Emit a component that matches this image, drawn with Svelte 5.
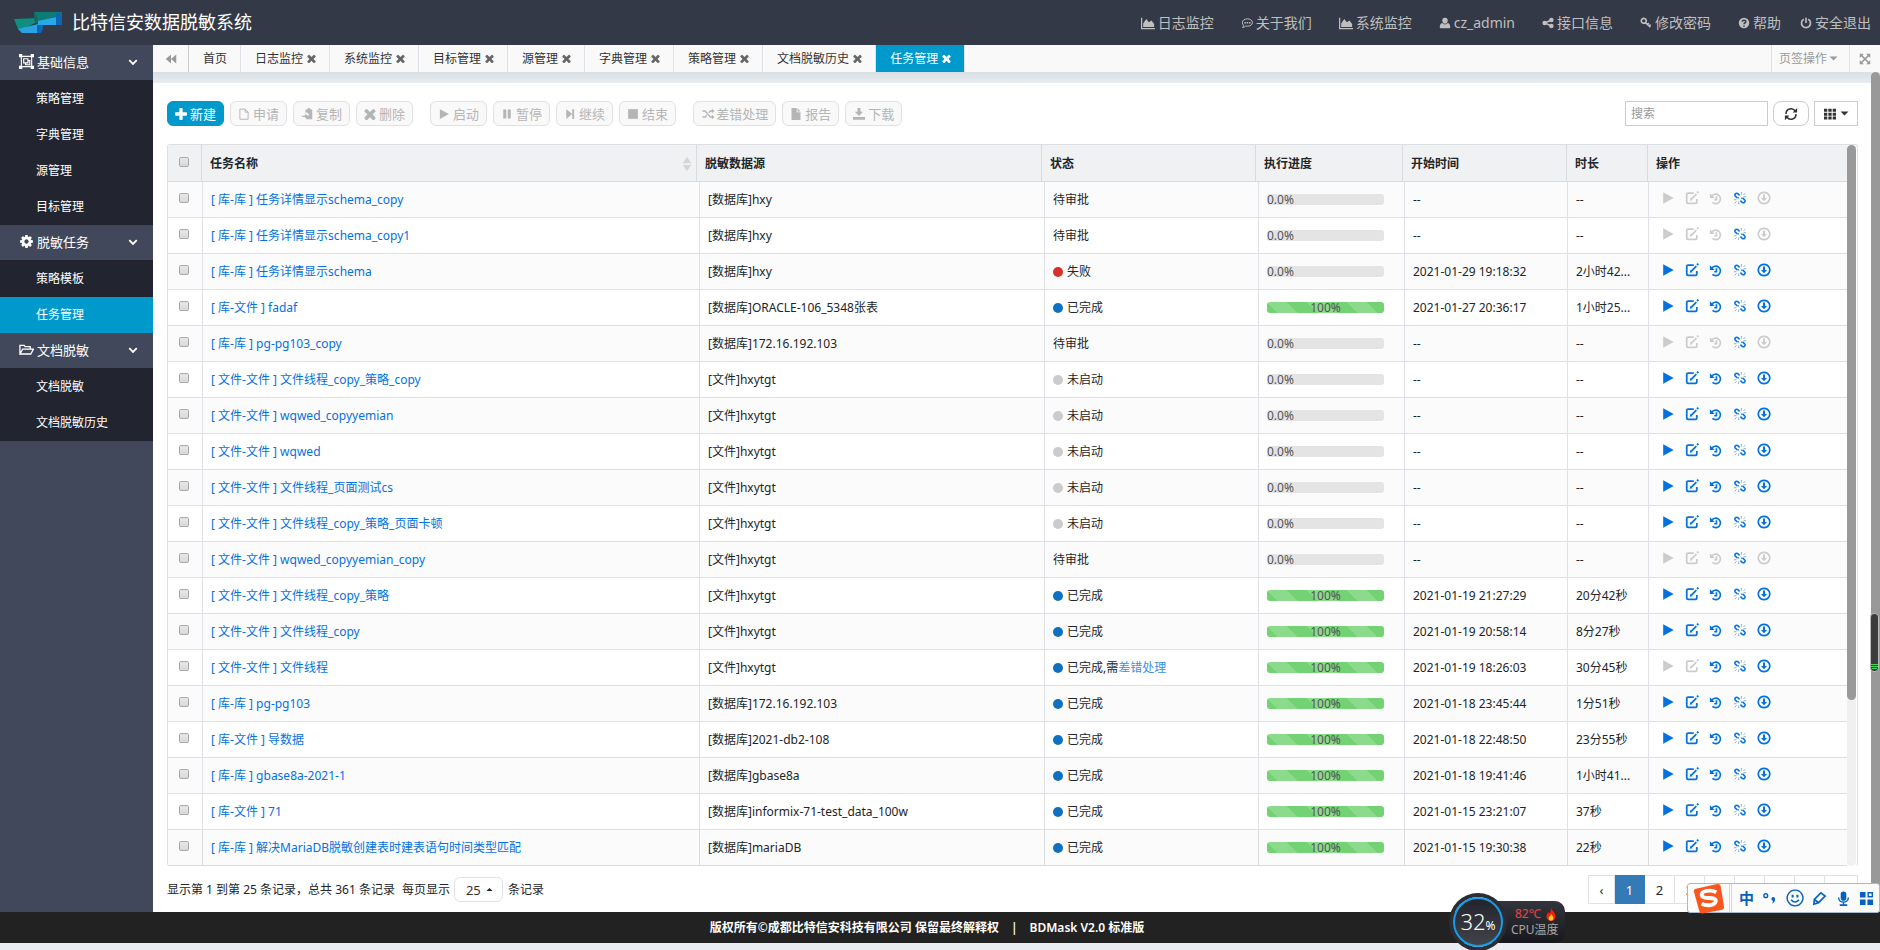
<script>
	const icons = {
		area: { fill: 'M0 2h1.400v11.600H16V15H0zM2.500 12.600V8.500L6 3.500l3 3.500 3-2 3 4v3.600z' },
		comment: {
			line: 'M8.500 2.500c3.800 0 6.700 2 6.700 4.900s-2.900 4.900-6.700 4.900c-.8 0-1.600-.1-2.300-.3-1 1-2.400 1.800-4.200 2 .9-.9 1.300-1.900 1.300-3-1-.9-1.500-2.200-1.500-3.600 0-2.900 2.900-4.900 6.700-4.900z',
			width: 1.3,
			fill: 'M4.500 6.500h2v2h-2zM7.600 6.500h2v2h-2zM10.700 6.500h2v2h-2z'
		},
		user: { fill: 'M8 1a3.600 3.600 0 0 1 3.600 3.900C11.600 7.200 10 9 8 9S4.400 7.200 4.400 4.900A3.600 3.600 0 0 1 8 1zM4.200 8C2 8.500 1 11 1 13.500 1 14.500 1.800 15 2.500 15h11c.7 0 1.500-.5 1.500-1.500 0-2.500-1-5-3.200-5.500-2.200 2.500-5.400 2.500-7.600 0z' },
		share: {
			fill: 'M3.500 5a3 3 0 1 1 0 6 3 3 0 0 1 0-6zM12.500 1a3 3 0 1 1 0 6 3 3 0 0 1 0-6zM12.500 9a3 3 0 1 1 0 6 3 3 0 0 1 0-6z',
			line: 'M12.500 4l-9 4 9 4',
			width: 2
		},
		key: { line: 'M5 1.800a3.300 3.300 0 1 0 .1 0zM7.200 7.600l6.800 6M10 10.200l1.800-2M12.300 12.200l1.800-2', width: 2.2 },
		question: { fill: 'M8 1a7 7 0 1 1 0 14A7 7 0 0 1 8 1z', cut: 'M5.600 6.200C5.700 3.800 10.500 3.600 10.400 6.200 10.300 7.800 8 7.800 8 9.600M8 11.200v1.800' },
		power: { line: 'M5 3a6 6 0 1 0 6 0M8 1v7', width: 2.2 },
		group: {
			line: 'M2.500 2.500h11v11h-11zM5 5h4.500v4.500H5zM9.500 7H11.500v4.500H7V9.500',
			width: 1.2,
			fill: 'M0 0h3.500v3.500H0zM12.500 0H16v3.500h-3.500zM0 12.500h3.500V16H0zM12.500 12.500H16V16h-3.500z'
		},
		cog: {
			box: '0 0 1792 1792',
			fill: 'M1152 896q0-106-75-181t-181-75-181 75-75 181 75 181 181 75 181-75 75-181zm512-109v222q0 12-8 23t-20 13l-185 28q-19 54-39 91 35 50 107 138 10 12 10 25t-9 23q-27 37-99 108t-94 71q-12 0-26-9l-138-108q-44 23-91 38-16 136-29 186-7 28-36 28h-222q-14 0-24.500-8.500t-11.500-21.500l-28-184q-49-16-90-37l-141 107q-10 9-25 9-14 0-25-11-126-114-165-168-7-10-7-23 0-12 8-23 15-21 51-66.500t54-70.500q-27-50-41-99l-183-27q-13-2-21-12.500t-8-23.500v-222q0-12 8-23t19-13l186-28q14-46 39-92-40-57-107-138-10-12-10-24 0-10 9-23 26-36 98.500-107.500t94.500-71.500q13 0 26 10l138 107q44-23 91-38 16-136 29-186 7-28 36-28h222q14 0 24.500 8.500t11.500 21.500l28 184q49 16 90 37l142-107q9-9 24-9 13 0 25 10 129 119 165 170 7 8 7 22 0 12-8 23-15 21-51 66.500t-54 70.500q26 50 41 98l183 28q13 2 21 12.500t8 23.500z'
		},
		folder: { line: 'M1 12V3.500h4.500l1 1.500H12v2.500M1 12.800l3-5.300h11.500l-3 5.300z', width: 1.4 },
		chevron: { line: 'M3 5.500l5 5 5-5', width: 2.4 },
		backward: { fill: 'M8 2v12L1 8zM15 2v12L8 8z' },
		expand: {
			line: 'M3 3l10 10M13 3L3 13',
			width: 2.2,
			fill: 'M1 1h5.500L1 6.500zM15 1v5.500L9.500 1zM1 15V9.500L6.500 15zM15 15H9.500L15 9.500z'
		},
		times: {
			box: '256 256 1280 1280',
			fill: 'M1490 1322q0 40-28 68l-136 136q-28 28-68 28t-68-28l-294-294-294 294q-28 28-68 28t-68-28l-136-136q-28-28-28-68t28-68l294-294-294-294q-28-28-28-68t28-68l136-136q28-28 68-28t68 28l294 294 294-294q28-28 68-28t68 28l136 136q28 28 28 68t-28 68l-294 294 294 294q28 28 28 68z'
		},
		plus: {
			box: '192 128 1408 1408',
			fill: 'M1600 736v192q0 40-28 68t-68 28h-416v416q0 40-28 68t-68 28h-192q-40 0-68-28t-28-68v-416h-416q-40 0-68-28t-28-68v-192q0-40 28-68t68-28h416v-416q0-40 28-68t68-28h192q40 0 68 28t28 68v416h416q40 0 68 28t28 68z'
		},
		page: { line: 'M2.500 1.500h7l4 4v9.500h-11zM9.500 1.500v4h4', width: 1.3 },
		copy: { fill: 'M6 2h2.500c0-2.500 4-2.500 4 0H15v13H7v-2.500l4-3.500-4-4v2H6zM0 9.500c2 1.500 3.500 1 5.500 0V7.500L9.500 10.500l-4 3.500v-2C3 12.500 1 11.500 0 9.500z' },
		play: { fill: 'M2.500 1.500v13L14.500 8z' },
		pause: { fill: 'M3 2h4v12H3zM9 2h4v12H9z' },
		step: { fill: 'M3 1.500L11 8l-8 6.500zM11 1.500h2.500v13H11z' },
		stop: { fill: 'M1.500 1.500h13v13h-13z' },
		random: { line: 'M0 4h3.500l7 8H13M0 12h3.500l2-2.300M8.500 6.300l2-2.300H13', width: 1.8, fill: 'M12.500 1L16 4l-3.500 3zM12.500 9l3.500 3-3.500 3z' },
		file: { fill: 'M2 0h7v5.500h5V16H2zM10 0l4 4.500h-4z' },
		download: { fill: 'M6 0h4v5h3.500L8 10.500 2.500 5H6zM0 12h16v3.500H0z' },
		refresh: { line: 'M2.300 8A5.800 5.800 0 0 1 12.800 4.500M13.700 8A5.800 5.800 0 0 1 3.200 11.500', width: 1.8, fill: 'M15 1v5.200H9.800zM1 15V9.800h5.200z' },
		grid: { fill: 'M0 1h4.400v4H0zM5.800 1h4.400v4H5.800zM11.600 1H16v4h-4.400zM0 6.200h4.400v4H0zM5.800 6.200h4.400v4H5.800zM11.600 6.200H16v4h-4.400zM0 11.400h4.400v4H0zM5.800 11.400h4.400v4H5.800zM11.600 11.400H16v4h-4.400z' },
		edit: { line: 'M10 2.500H3.500Q2 2.500 2 4v8.500Q2 14 3.500 14H12q1.500 0 1.500-1.500V9M7 9.500L13 3.500', width: 2, fill: 'M6 8l2.500 2.500L5.500 11zM13 1.500L14.500 0 16 1.500 14.500 3z' },
		history: { line: 'M3.200 6A5.400 5.400 0 1 1 4 13M8.500 6v4H6', width: 1.9, fill: 'M1 2.500v5.500h5.500z' },
		unlink: { line: 'M7.500 5L5.500 3Q4 2 2.700 3.300T3 6.200L5 8M8.500 11l2 2q1.500 1 2.800-.3T13 9.800L11 8M5.500 7.500l1 .8M9.500 7.700l1 .8', width: 1.7, thin: 'M9.500 1v3M12 4.500l2-2M12 6.500h3M1 10h3M4 12l-2 2M6.500 12v3' },
		down: { line: 'M8 1.500a6.500 6.500 0 1 0 .1 0z', width: 1.9, fill: 'M6.800 4h2.400v4h2.300L8 11.800 4.500 8h2.300z' },
		caretDown: { fill: 'M1 4.500h14L8 11.500z' },
		caretUp: { fill: 'M1 11.500h14L8 4.500z' },
		sort: { fill: 'M8 0l5 7H3zM3 9h10l-5 7z' },
		smile: { line: 'M8 1a7 7 0 1 0 .1 0zM4.500 9.500q3.500 4 7 0', width: 1.3, fill: 'M5 5h1.800v2.500H5zM9.300 5h1.800v2.500H9.300z' },
		pen: { line: 'M2 14l.5-5L9.500 2l4.500 3.500-7 7zM2.500 9l4.500 3.500', width: 1.8 },
		mic: { fill: 'M5 3.500a3 3 0 0 1 6 0v4a3 3 0 0 1-6 0zM4 14h8v2H4z', line: 'M2.800 7c0 6.500 10.400 6.500 10.400 0M8 12v3', width: 1.5 },
		apps: { fill: 'M1 1h6v6H1zM1 9h6v6H1zM9 9h6v6H9z', line: 'M9.800 1.800h4.400v4.400H9.800z', width: 1.5 }
	};

	const nav = [
		['area', '日志监控'],
		['comment', '关于我们'],
		['area', '系统监控'],
		['user', 'cz_admin'],
		['share', '接口信息'],
		['key', '修改密码'],
		['question', '帮助'],
		['power', '安全退出']
	];

	const menu = [
		{ icon: 'group', name: '基础信息', items: ['策略管理', '字典管理', '源管理', '目标管理'] },
		{ icon: 'cog', name: '脱敏任务', items: ['策略模板', '任务管理'] },
		{ icon: 'folder', name: '文档脱敏', items: ['文档脱敏', '文档脱敏历史'] }
	];

	const tabs = ['首页', '日志监控', '系统监控', '目标管理', '源管理', '字典管理', '策略管理', '文档脱敏历史', '任务管理'];
	let current = $state('任务管理');

	const tools = [
		[['plus', '新建'], ['page', '申请'], ['copy', '复制'], ['times', '删除']],
		[['play', '启动'], ['pause', '暂停'], ['step', '继续'], ['stop', '结束']],
		[['random', '差错处理'], ['file', '报告'], ['download', '下载']]
	];

	const columns = ['任务名称', '脱敏数据源', '状态', '执行进度', '开始时间', '时长', '操作'];

	// name, source, status, start time, duration
	const rows = [
		['[ 库-库 ] 任务详情显示schema_copy', '[数据库]hxy', '待审批', '--', '--'],
		['[ 库-库 ] 任务详情显示schema_copy1', '[数据库]hxy', '待审批', '--', '--'],
		['[ 库-库 ] 任务详情显示schema', '[数据库]hxy', '失败', '2021-01-29 19:18:32', '2小时42...'],
		['[ 库-文件 ] fadaf', '[数据库]ORACLE-106_5348张表', '已完成', '2021-01-27 20:36:17', '1小时25...'],
		['[ 库-库 ] pg-pg103_copy', '[数据库]172.16.192.103', '待审批', '--', '--'],
		['[ 文件-文件 ] 文件线程_copy_策略_copy', '[文件]hxytgt', '未启动', '--', '--'],
		['[ 文件-文件 ] wqwed_copyyemian', '[文件]hxytgt', '未启动', '--', '--'],
		['[ 文件-文件 ] wqwed', '[文件]hxytgt', '未启动', '--', '--'],
		['[ 文件-文件 ] 文件线程_页面测试cs', '[文件]hxytgt', '未启动', '--', '--'],
		['[ 文件-文件 ] 文件线程_copy_策略_页面卡顿', '[文件]hxytgt', '未启动', '--', '--'],
		['[ 文件-文件 ] wqwed_copyyemian_copy', '[文件]hxytgt', '待审批', '--', '--'],
		['[ 文件-文件 ] 文件线程_copy_策略', '[文件]hxytgt', '已完成', '2021-01-19 21:27:29', '20分42秒'],
		['[ 文件-文件 ] 文件线程_copy', '[文件]hxytgt', '已完成', '2021-01-19 20:58:14', '8分27秒'],
		['[ 文件-文件 ] 文件线程', '[文件]hxytgt', '需处理', '2021-01-19 18:26:03', '30分45秒'],
		['[ 库-库 ] pg-pg103', '[数据库]172.16.192.103', '已完成', '2021-01-18 23:45:44', '1分51秒'],
		['[ 库-文件 ] 导数据', '[数据库]2021-db2-108', '已完成', '2021-01-18 22:48:50', '23分55秒'],
		['[ 库-库 ] gbase8a-2021-1', '[数据库]gbase8a', '已完成', '2021-01-18 19:41:46', '1小时41...'],
		['[ 库-文件 ] 71', '[数据库]informix-71-test_data_100w', '已完成', '2021-01-15 23:21:07', '37秒'],
		['[ 库-库 ] 解决MariaDB脱敏创建表时建表语句时间类型匹配', '[数据库]mariaDB', '已完成', '2021-01-15 19:30:38', '22秒']
	];

	const dots = { 失败: 'red', 已完成: 'blue', 需处理: 'blue', 未启动: 'grey' };
	const actions = [['play', '启动'], ['edit', '编辑'], ['history', '历史'], ['unlink', '解除'], ['down', '下载']];

	// the input method bar lies over the pages after 3
	const pages = ['‹', '1', '2', '3', '', '', '', '', ''];

	function isOff(status, action) {
		if (status === '待审批') return action !== 'unlink';
		if (status === '需处理') return action === 'play' || action === 'edit';
		return false;
	}
</script>

{#snippet icon(name, size = 'm')}
	{@const i = icons[name]}
	<svg class="icon {size} i-{name}" viewBox={i.box ?? '0 0 16 16'} aria-hidden="true">
		{#if i.fill}<path d={i.fill} fill="currentColor" />{/if}
		{#if i.line}<path d={i.line} fill="none" stroke="currentColor" stroke-width={i.width} />{/if}
		{#if i.thin}<path d={i.thin} fill="none" stroke="currentColor" stroke-width="1" opacity="0.6" />{/if}
		{#if i.cut}<path d={i.cut} fill="none" stroke="#343947" stroke-width="2" />{/if}
	</svg>
{/snippet}

<div class="page">
	<header>
		<svg class="logo" viewBox="0 0 48 22" aria-hidden="true">
			<path d="M0 7l25-1-2 4-14 7H4z" fill="#0e8f80" />
			<path d="M20 0h28v3L30 8l-7 3z" fill="#0b7d74" />
			<path d="M20 0l4 7-1 5-3-4z" fill="#17665f" />
			<path d="M42 1h6v12h-6z" fill="#0b67b5" />
			<path d="M24 9l18-4v8H24z" fill="#2aa7e6" />
			<path d="M4 17l20-5v9H8z" fill="#2aa3e2" />
			<path d="M23 13h6v4l-2 4h-4z" fill="#0b67b5" />
		</svg>
		<h1>比特信安数据脱敏系统</h1>
		<nav>
			{#each nav as [name, label]}
				<a href="#top">{@render icon(name, name === 'area' ? 'm' : 's')}{label}</a>
			{/each}
		</nav>
	</header>

	<div class="main">
		<aside>
			{#each menu as group}
				<button class="group">
					{@render icon(group.icon, 'l')}
					<span>{group.name}</span>
					{@render icon('chevron', 's')}
				</button>
				<ul>
					{#each group.items as item}
						<li><a href="#menu" class:active={item === current}>{item}</a></li>
					{/each}
				</ul>
			{/each}
		</aside>

		<div class="workspace">
			<div class="tabs">
				<button class="back" aria-label="向左">{@render icon('backward', 's')}</button>
				{#each tabs as tab}
					<button class="tab" class:active={tab === current} onclick={() => (current = tab)}>
						{tab}{#if tab !== '首页'}{@render icon('times', 'xs')}{/if}
					</button>
				{/each}
				<button class="ops">页签操作{@render icon('caretDown', 'xs')}</button>
				<button class="full" aria-label="全屏">{@render icon('expand', 's')}</button>
			</div>

			<div class="frame">
				<div class="content">
					<div class="panel">
						<div class="toolbar">
							{#each tools as set}
								<div class="set">
									{#each set as [name, label]}
										<button class="tool" class:primary={name === 'plus'} disabled={name !== 'plus'}>
											{@render icon(name, 's')}<span>{label}</span>
										</button>
									{/each}
								</div>
							{/each}
							<div class="search">
								<input type="text" placeholder="搜索" aria-label="搜索" />
								<button class="refresh" aria-label="刷新">{@render icon('refresh', 'm')}</button>
								<button class="cols" aria-label="列">{@render icon('grid', 's')}{@render icon('caretDown', 'xs')}</button>
							</div>
						</div>

						<div class="grid">
							<div class="tables">
								<table class="head">
									<colgroup>
										<col class="h0" /><col class="h1" /><col class="h2" /><col class="h3" />
										<col class="h4" /><col class="h5" /><col class="h6" /><col class="h7" />
									</colgroup>
									<thead>
										<tr>
											<th class="check"><input type="checkbox" aria-label="全选" /></th>
											{#each columns as col, n}
												<th>
													<div class="th">{col}{#if n === 0}{@render icon('sort', 'm')}{/if}</div>
												</th>
											{/each}
										</tr>
									</thead>
								</table>
								<table class="body">
									<colgroup>
										<col class="c0" /><col class="c1" /><col class="c2" /><col class="c3" />
										<col class="c4" /><col class="c5" /><col class="c6" /><col class="c7" />
									</colgroup>
									<tbody>
										{#each rows as [name, source, status, start, time]}
											{@const done = status === '已完成' || status === '需处理'}
											<tr>
												<td class="check"><input type="checkbox" aria-label={name} /></td>
												<td><a href="#task">{name}</a></td>
												<td>{source}</td>
												<td>
													{#if dots[status]}<i class="dot {dots[status]}"></i>{/if}{#if status === '需处理'}已完成,需<a class="fix" href="#fix">差错处理</a>{:else}{status}{/if}
												</td>
												<td>
													<div class="progress" class:done>{done ? '100%' : '0.0%'}</div>
												</td>
												<td>{start}</td>
												<td>{time}</td>
												<td>
													<div class="actions">
														{#each actions as [act, label]}
															<button disabled={isOff(status, act)} aria-label={label}>{@render icon(act, 'm')}</button>
														{/each}
													</div>
												</td>
											</tr>
										{/each}
									</tbody>
								</table>
							</div>
							<div class="track"><div class="thumb"></div></div>
						</div>

						<div class="bottom">
							<span>显示第 1 到第 25 条记录，总共 361 条记录</span>
							<label for="size">每页显示</label>
							<div class="size">
								<select id="size">
									<option>25</option>
									<option>50</option>
								</select>
								{@render icon('caretUp', 'xxs')}
							</div>
							<span>条记录</span>
							<div class="pager">
								{#each pages as p}
									<button class:active={p === '1'}>{p}</button>
								{/each}
							</div>
						</div>
					</div>
				</div>
				<div class="scroll"></div>
			</div>
		</div>
	</div>

	<footer>版权所有©成都比特信安科技有限公司 保留最终解释权<span>|</span>BDMask V2.0 标准版</footer>

	<div class="cpu">
		<div class="ball">32<small>%</small></div>
		<div class="temp">
			<b>82℃
				<svg class="flame" viewBox="0 0 12 16" aria-hidden="true">
					<path d="M6 0c1 3 5 5 5.500 9.500C12 13.500 9 16 6 16S0 13.500.5 9.500C.8 7.500 2 7 2.500 4.500L4 7c1.500-2 2-4 2-7z" fill="#f3200c" />
					<path d="M6.500 7c0 2 2.500 3.500 2.500 5.500S7.500 15.500 6 15.500 3 14.500 3 12.500 5.500 10 6.500 7z" fill="#ffd21c" />
				</svg>
			</b>
			<span>CPU温度</span>
		</div>
	</div>

	<div class="gauge"><i></i><i></i><i></i></div>

	<div class="ime">
		<svg class="sogou" viewBox="0 0 32 32" aria-hidden="true">
			<path d="M3 6L25 1q3-.5 3.500 2L32 24q.3 3-2 3.500L10 31.500Q7 32 6.500 29L1 9Q.5 6.500 3 6z" fill="#f9571c" />
			<path d="M24 9.500C18 6.500 8.500 8 9 12.500 9.500 17.500 24 13.500 23.500 18.500 23 23.500 14 24 9 21.500" fill="none" stroke="#fff" stroke-width="4" />
		</svg>
		<div class="tray">
			<strong>中</strong>
			<svg class="icon l" viewBox="0 0 16 16" aria-hidden="true">
				<circle cx="4" cy="5" r="2" fill="none" stroke="currentColor" stroke-width="1.500" />
				<path d="M10 8.500a2 2 0 1 1 4 0c0 2.500-1.500 4.500-3.500 5 .8-1 1.300-2 1.200-3A2 2 0 0 1 10 8.500z" fill="currentColor" />
			</svg>
			{@render icon('smile', 'xl')}
			{@render icon('pen', 'l')}
			{@render icon('mic', 'l')}
			{@render icon('apps', 'l')}
		</div>
	</div>
</div>

<style>
	:global(body) {
		margin: 0;
		background: #e9edf2;
		font-family: 'Noto Sans', 'Noto Sans CJK SC', sans-serif;
		font-size: 12px;
		line-height: 16px;
		color: #212529;
	}

	.page {
		position: relative;
		min-height: 100vh;
		overflow: hidden;
	}
	button,
	input,
	select {
		font: inherit;
		color: inherit;
		margin: 0;
		padding: 0;
		border: 0;
		background: none;
		box-sizing: border-box;
	}
	a {
		color: #0371e0;
		text-decoration: none;
	}

	.icon {
		width: 14px;
		height: 14px;
		flex: none;
	}
	.icon.xl {
		width: 18px;
		height: 18px;
	}
	.icon.l {
		width: 15px;
		height: 15px;
	}
	.icon.s {
		width: 12px;
		height: 12px;
	}
	.icon.xs {
		width: 9px;
		height: 9px;
	}
	.icon.xxs {
		width: 7px;
		height: 7px;
	}

	header {
		display: flex;
		align-items: center;
		box-sizing: border-box;
		height: 45px;
		padding: 0 9px 0 14px;
		background: #343947;
	}
	.logo {
		width: 48px;
		height: 22px;
	}
	h1 {
		margin: 0 auto 2px 10px;
		font-size: 18px;
		line-height: 26px;
		font-weight: normal;
		color: #fff;
	}
	nav {
		display: flex;
		gap: 27px;
	}
	nav a {
		display: flex;
		align-items: center;
		gap: 3px;
		font-size: 14px;
		line-height: 20px;
		color: #bfbfbf;
	}
	nav a:last-child {
		margin-left: -8px;
	}

	.main {
		display: flex;
	}
	aside {
		flex: none;
		width: 153px;
		background: #42485b;
	}
	.group {
		display: flex;
		align-items: center;
		gap: 3px;
		width: 100%;
		height: 35px;
		padding: 0 14px 2px 19px;
		font-size: 13px;
		color: #fff;
		text-align: left;
	}
	.group span {
		flex: 1;
	}
	aside ul {
		margin: 0;
		padding: 1px 0 0;
		list-style: none;
		background: #22252f;
	}
	aside li a {
		display: block;
		padding-left: 36px;
		line-height: 36px;
		color: #fff;
	}
	aside li a.active {
		background: #0099cc;
	}

	.workspace {
		flex: 1;
		min-width: 0;
	}
	.tabs {
		display: flex;
		height: 27px;
		background: #f9f9f9;
	}
	.tabs button {
		display: flex;
		align-items: center;
		gap: 4px;
		padding: 0 13px 0 14px;
		border-right: 1px solid #dee2e6;
		white-space: nowrap;
		color: #333;
	}
	.tab .icon {
		color: #666;
	}
	.tabs .back {
		padding: 0 11px 0 12px;
		border-color: #ccc;
		color: #999;
	}
	.tabs .active,
	.tabs .active .icon {
		background: #0099cc;
		color: #fff;
	}
	.tabs .ops {
		margin-left: auto;
		padding: 0 11px 0 7px;
		gap: 2px;
		border-left: 1px solid #dee2e6;
		color: #999;
	}
	.tabs .full {
		padding: 0 9px;
		border: 0;
		color: #999;
	}

	.frame {
		display: flex;
	}
	.content {
		flex: 1;
		min-width: 0;
		padding-top: 11px;
		background: linear-gradient(#d9dfe2, #e9edf2 11px);
	}
	.scroll {
		width: 9px;
		background: #999;
		border-radius: 5px 5px 0 0;
	}
	.panel {
		padding: 18px 13px 8px 14px;
		background: #fff;
	}

	.toolbar {
		display: flex;
		gap: 17px;
		margin-bottom: 18px;
	}
	.set,
	.search {
		display: flex;
		gap: 6px;
	}
	.tool {
		display: flex;
		align-items: center;
		gap: 3px;
		height: 25px;
		padding: 0 7px;
		border: 1px solid #e1e1e1;
		border-radius: 6px;
		background: #f9f9f9;
		font-size: 13px;
		color: #b5b5b5;
	}
	.tool .i-random {
		width: 15px;
		margin-right: -3px;
	}
	.tool.primary {
		border-color: #0099cc;
		background: #0099cc;
		color: #fff;
	}
	.search {
		margin-left: auto;
		gap: 5px;
	}
	.search input {
		width: 143px;
		height: 25px;
		padding: 0 5px;
		border: 1px solid #ccc;
	}
	.search input::placeholder {
		color: #999;
	}
	.search button {
		display: flex;
		align-items: center;
		justify-content: center;
		gap: 4px;
		border: 1px solid #ccc;
		color: #333;
	}
	.refresh {
		width: 36px;
		border-radius: 8px;
	}
	.cols {
		width: 44px;
	}

	.grid {
		display: flex;
		border: 1px solid #dcdfe2;
		border-bottom: 0;
		border-radius: 3px;
	}
	.tables {
		flex: 1;
		min-width: 0;
	}
	table {
		width: 100%;
		table-layout: fixed;
		border-collapse: separate;
		border-spacing: 0;
	}
	.h0 { width: 34px; }
	.h1 { width: 495px; }
	.h2 { width: 345px; }
	.h3 { width: 214px; }
	.h4 { width: 147px; }
	.h5 { width: 164px; }
	.h6 { width: 81px; }
	.h7 { width: 199px; }
	.c0 { width: 35px; }
	.c1 { width: 497px; }
	.c2 { width: 345px; }
	.c3 { width: 214px; }
	.c4 { width: 146px; }
	.c5 { width: 163px; }
	.c6 { width: 81px; }
	.c7 { width: 198px; }
	th,
	td {
		height: 35px;
		padding: 0 8px;
		border-bottom: 1px solid #dee2e6;
		border-right: 1px solid #dee2e6;
		text-align: left;
		white-space: nowrap;
		overflow: hidden;
	}
	th {
		height: 36px;
		border-color: #d9dcdf;
		background: #eff1f3;
	}
	th:last-child,
	td:last-child {
		border-right: 0;
	}
	tbody tr:nth-child(odd) {
		background: #fbfbfb;
	}
	tbody tr:last-child td {
		border-color: #d9dcdf;
	}
	.check {
		padding: 0 2px 3px 0;
		height: 32px;
		text-align: center;
	}
	th.check {
		height: 33px;
	}
	.th {
		display: flex;
		align-items: center;
		justify-content: space-between;
		padding-top: 1px;
	}
	.th .icon {
		margin-right: -6px;
		color: #d5d5d5;
	}
	input[type='checkbox'] {
		appearance: none;
		display: block;
		width: 10px;
		height: 10px;
		margin: 0 auto;
		border: 1px solid #aaa;
		border-radius: 2px;
		background: linear-gradient(#e8e8e8, #d8d8d8);
	}
	.dot {
		display: inline-block;
		width: 10px;
		height: 10px;
		margin-right: 4px;
		border-radius: 50%;
		vertical-align: -1px;
	}
	.red {
		background: #d9302c;
	}
	.blue {
		background: #1070c0;
	}
	.grey {
		background: #ccc;
	}
	.fix {
		color: #3a8ee6;
	}
	.progress {
		height: 11px;
		margin-right: 12px;
		border-radius: 3px;
		background: #e4e4e4;
		line-height: 11px;
		color: #555;
	}
	.progress.done {
		background-color: #73d273;
		background-image: linear-gradient(45deg, rgba(255, 255, 255, 0.18) 25%, transparent 25%, transparent 50%, rgba(255, 255, 255, 0.18) 50%, rgba(255, 255, 255, 0.18) 75%, transparent 75%);
		background-size: 40px 40px;
		text-align: center;
	}
	.actions {
		display: flex;
		gap: 10px;
		padding: 0 4px 3px;
	}
	.actions button {
		display: flex;
		color: #0371e0;
	}
	.actions button:disabled {
		color: #ccc;
	}
	.track {
		width: 9px;
		margin-right: 1px;
		background: #f0f0f0;
		border-radius: 5px;
	}
	.thumb {
		height: 77%;
		background: #999;
		border-radius: 5px;
	}

	.bottom {
		display: flex;
		align-items: center;
		margin-top: 9px;
	}
	.bottom label {
		margin: 0 4px 0 7px;
	}
	.size {
		display: flex;
		align-items: center;
		width: 49px;
		height: 25px;
		margin-right: 5px;
		box-sizing: border-box;
		border: 1px solid #dee2e6;
		border-radius: 6px;
	}
	.size select {
		appearance: none;
		width: 31px;
		height: 23px;
		padding-left: 11px;
		font-size: 13px;
		color: #333;
	}
	.pager {
		display: flex;
		margin-left: auto;
	}
	.pager button {
		width: 30px;
		height: 29px;
		border: 1px solid #dee2e6;
		border-left-width: 0;
		font-size: 13px;
	}
	.pager button:first-child {
		width: 27px;
		border-left-width: 1px;
	}
	.pager button:last-child {
		width: 33px;
	}
	.pager .active {
		border-color: #337ab7;
		background: #337ab7;
		color: #fff;
	}

	footer {
		height: 31px;
		padding-right: 26px;
		background: #222;
		line-height: 31px;
		text-align: center;
		font-weight: 600;
		color: #fff;
	}
	footer span {
		margin: 0 12px;
	}

	/* desktop widgets floating over the page */
	.cpu {
		position: absolute;
		left: 1449px;
		top: 892px;
		height: 60px;
		display: flex;
		align-items: center;
	}
	.ball {
		position: relative;
		z-index: 1;
		width: 46px;
		height: 46px;
		border: 2px solid #169de8;
		border-radius: 50%;
		background: linear-gradient(#23242b, #41434b);
		box-shadow: 0 0 0 4px #2b2d35;
		margin: 4px;
		line-height: 44px;
		text-align: center;
		font-size: 22px;
		font-weight: 300;
		color: #fff;
		white-space: nowrap;
	}
	.ball small {
		font-size: 12px;
		font-weight: normal;
	}
	.temp {
		display: flex;
		flex-direction: column;
		width: 46px;
		margin-left: -23px;
		padding: 5px 8px 5px 27px;
		border-radius: 0 10px 10px 0;
		background: linear-gradient(#34353c, #17181d);
		color: #a5a5a5;
		white-space: nowrap;
	}
	.temp b {
		display: flex;
		align-items: center;
		gap: 5px;
		padding-left: 4px;
		font-weight: normal;
		color: #ee4444;
	}
	.flame {
		width: 10px;
		height: 13px;
		flex: none;
	}

	.gauge {
		position: absolute;
		right: 1px;
		top: 613px;
		width: 7px;
		height: 57px;
		display: flex;
		flex-direction: column;
		justify-content: flex-end;
		gap: 1px;
		border: 1px solid #bbb;
		border-radius: 4px;
		background: #3c3c3c;
	}
	.gauge i {
		height: 1px;
		background: #43d95b;
	}
	.gauge i:last-child {
		margin: 0 1px 2px;
	}

	.ime {
		position: absolute;
		right: 0;
		top: 883px;
		display: flex;
		align-items: center;
		width: 191px;
		height: 28px;
		border: 1px solid #a9b9c9;
		border-radius: 3px;
		background: #fbfbfb;
		color: #0662c0;
	}
	.sogou {
		width: 31px;
		height: 31px;
		margin: 0 5px;
		flex: none;
	}
	.tray {
		flex: 1;
		display: flex;
		align-items: center;
		justify-content: space-between;
		height: 28px;
		padding: 0 5px 0 7px;
		border-left: 3px double #f8cdbd;
	}
	.tray strong {
		font-size: 15px;
	}
</style>
